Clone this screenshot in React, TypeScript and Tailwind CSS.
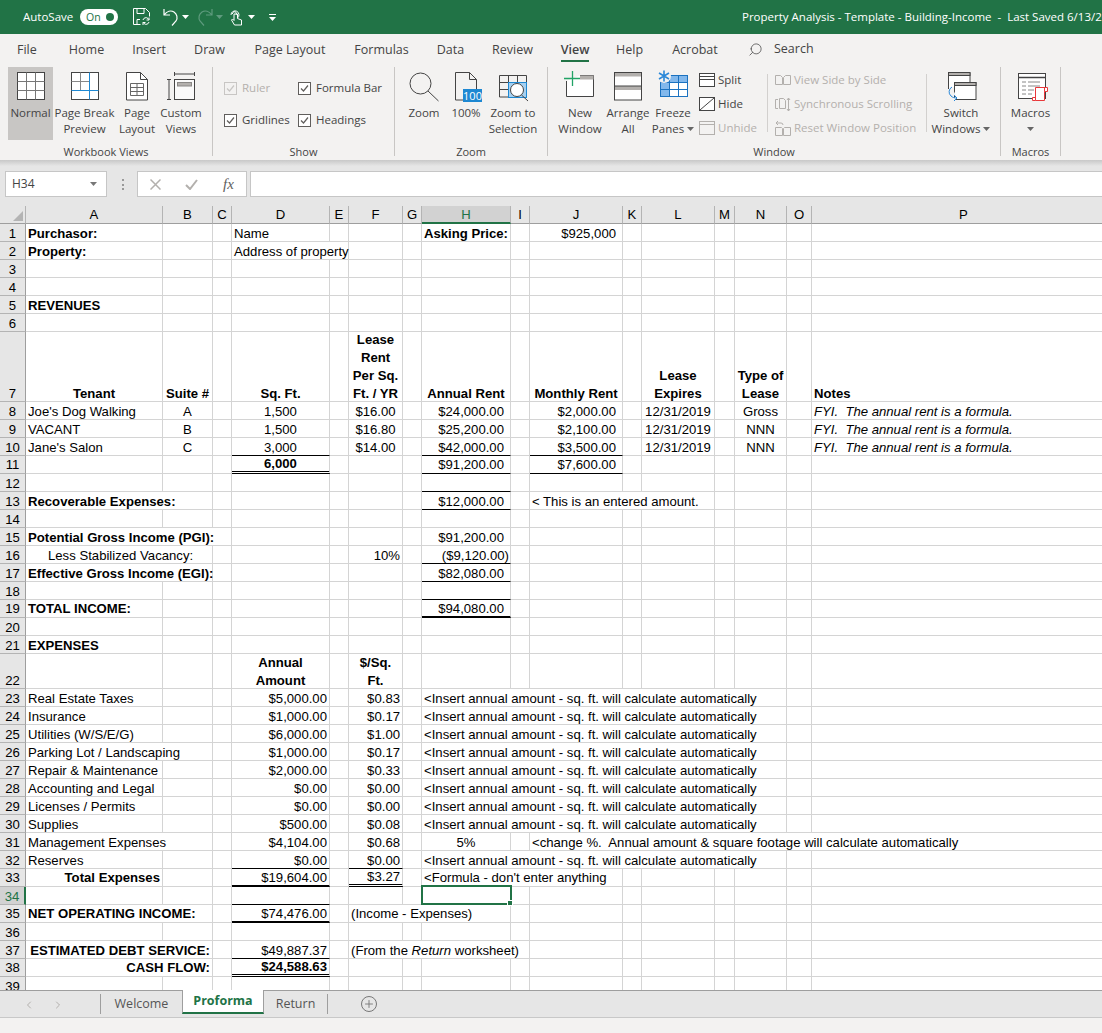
import type { ReactNode } from 'react';
import { ChevronLeft, ChevronRight, Plus, Search } from 'lucide-react';

const uiFont = 'font-["Open_Sans",sans-serif]';

function Caret({ className = '' }: { className?: string }) {
    return (
        <svg width="7" height="4" viewBox="0 0 7 4" className={`inline-block shrink-0 ${className}`}>
            <path d="M0 0h7L3.500 4z" fill="currentColor" />
        </svg>
    );
}

function Icon({ children }: { children: ReactNode }) {
    return (
        <svg width="36" height="36" viewBox="0 0 36 36" fill="none" stroke="#444" strokeWidth="1" className="shrink-0">
            {children}
        </svg>
    );
}

function BigButton({ icon, width, active, children }: { icon: ReactNode; width: string; active?: boolean; children: ReactNode }) {
    return (
        <div className={`${width} h-[73px] shrink-0 flex flex-col items-center ${active ? 'bg-[#c8c6c4]' : ''}`}>
            <div className="h-[38px] w-full flex justify-center">{icon}</div>
            <div className="text-[11.5px] leading-[16px] text-center text-[#444] whitespace-nowrap">{children}</div>
        </div>
    );
}

function Group({ width, label, children }: { width: string; label: string; children: ReactNode }) {
    return (
        <div className={`${width} h-[89px] border-r border-[#c8c6c4] shrink-0 flex flex-col`}>
            <div className="h-[77px] flex">{children}</div>
            <div className="h-[12px] leading-[16px] text-[11px] text-center text-[#444]">{label}</div>
        </div>
    );
}

function CheckItem({ label, disabled }: { label: string; disabled?: boolean }) {
    return (
        <div className={`flex items-center gap-[5px] h-[16px] text-[11.5px] whitespace-nowrap ${disabled ? 'text-[#b3b0ad]' : 'text-[#444]'}`}>
            <svg width="13" height="13" viewBox="0 0 13 13" fill="none">
                <rect x="0.5" y="0.5" width="12" height="12" fill={disabled ? '#f3f2f1' : '#fff'} stroke={disabled ? '#c8c6c4' : '#605e5c'} />
                <path d="M3 6.500l2.500 2.500L10 3.500" stroke={disabled ? '#c8c6c4' : '#605e5c'} strokeWidth="1.200" />
            </svg>
            {label}
        </div>
    );
}

function SmallRow({ icon, disabled, children }: { icon: ReactNode; disabled?: boolean; children: ReactNode }) {
    return (
        <div className={`h-[24px] flex items-center gap-[3px] text-[11.5px] whitespace-nowrap ${disabled ? 'text-[#b3b0ad]' : 'text-[#444]'}`}>
            {icon}
            {children}
        </div>
    );
}

function TitleBar() {
    return (
        <div className="h-[34px] bg-[#217346] text-white flex items-center shrink-0 overflow-hidden">
            <span className="ml-[23px] w-[57px] shrink-0 text-[11.5px]">AutoSave</span>
            <div className="w-[38px] h-[16px] shrink-0 rounded-full bg-white flex items-center justify-between pl-[6px] pr-[4px]">
                <span className="text-[10.5px] leading-none text-[#217346]">On</span>
                <span className="w-[8px] h-[8px] rounded-full bg-[#217346]" />
            </div>
            <svg width="17" height="18" viewBox="0 0 17 18" fill="none" stroke="#fff" className="ml-[15px] shrink-0">
                <path d="M.5.500h12l4 4v4M.5.500v16h7M4 .5v5h7v-5M4 16.500v-5h3" />
                <path d="M10 12a3 3 0 0 1 5-1.500l1 1M16 14a3 3 0 0 1-5 1.500l-1-1M16 9.500v2.500h-2.500M10 17v-2.500h2.500" />
            </svg>
            <svg width="16" height="18" viewBox="0 0 16 18" fill="none" stroke="#fff" strokeWidth="1.200" className="ml-[13px] shrink-0">
                <path d="M1 1v6h6M1 7c3-4 7-5 10-3s4 6 2 9l-4 4.500" />
            </svg>
            <Caret className="ml-[3px] text-white" />
            <svg width="16" height="18" viewBox="0 0 16 18" fill="none" stroke="#5f9b7e" strokeWidth="1.200" className="ml-[8px] shrink-0">
                <path d="M15 1v6H9M15 7c-3-4-7-5-10-3s-4 6-2 9l4 4.500" />
            </svg>
            <Caret className="ml-[3px] text-[#5f9b7e]" />
            <svg width="14" height="18" viewBox="0 0 14 18" fill="none" stroke="#fff" className="ml-[6px] shrink-0">
                <path d="M2 7a4 4 0 1 1 6.500 3M3.500 6a2 2 0 1 1 3.500 1" />
                <path d="M5 6v6.500l-1.500-1.500-1 1 3 5h7v-5l-4-1.500v-4.500z" />
            </svg>
            <Caret className="ml-[5px] text-white" />
            <svg width="7" height="7" viewBox="0 0 7 7" className="ml-[14px] shrink-0 text-white">
                <path d="M0 0h7v1H0zM0 3h7L3.500 7z" fill="currentColor" />
            </svg>
            <span className="ml-[466px] shrink-0 text-[11.5px] whitespace-pre">Property Analysis - Template - Building-Income  -  Last Saved 6/13/2020</span>
        </div>
    );
}

const tabs = [
    { label: 'Home', w: 'w-[35px]' },
    { label: 'Insert', w: 'w-[32px]' },
    { label: 'Draw', w: 'w-[31px]' },
    { label: 'Page Layout', w: 'w-[72px]' },
    { label: 'Formulas', w: 'w-[53px]' },
    { label: 'Data', w: 'w-[27px]' },
    { label: 'Review', w: 'w-[39px]' },
    { label: 'View', w: 'w-[28px]' },
    { label: 'Help', w: 'w-[27px] -ml-[2px]' },
    { label: 'Acrobat', w: 'w-[46px]' },
];

function TabRow() {
    return (
        <div className="h-[33px] flex items-start pl-[17px] gap-[29px] text-[12.5px] text-[#444] shrink-0">
            <span className="w-[23px] h-[28px] leading-[31px] whitespace-nowrap">File</span>
            {tabs.map((tab) => (
                <div key={tab.label} className={`${tab.w} h-[28px] flex justify-center whitespace-nowrap leading-[31px] ${tab.label === 'View' ? 'font-semibold border-b-[2px] border-[#217346]' : ''}`}>
                    {tab.label}
                </div>
            ))}
            <div className="flex items-center gap-[11px] h-[31px] ml-px">
                <Search size={15} strokeWidth={1.200} className="-scale-x-100" />
                Search
            </div>
        </div>
    );
}

function Ribbon() {
    return (
        <div className="h-[93px] flex shrink-0">
            <Group width="w-[213px]" label="Workbook Views">
                <div className="pl-2 flex">
                    <BigButton active width="w-[45px]" icon={
                        <Icon>
                            <rect x="4.500" y="5.500" width="27" height="27" fill="#fff" />
                            <path d="M13.500 5.500v27M22.500 5.500v27M4.500 14.500h27M4.500 23.500h27" stroke="#777" />
                        </Icon>
                    }>Normal</BigButton>
                    <div className="w-[2px]" />
                    <BigButton width="w-[59px]" icon={
                        <Icon>
                            <rect x="4.500" y="5.500" width="27" height="27" fill="#fff" />
                            <path d="M13.500 5.500v18M4.500 14.500h18" stroke="#888" />
                            <path d="M22.500 5.500v27M4.500 23.500h27" stroke="#1e88d2" />
                        </Icon>
                    }>Page Break<br />Preview</BigButton>
                    <div className="w-[3px]" />
                    <BigButton width="w-[40px]" icon={
                        <Icon>
                            <path d="M7.500 5.500h14l7 7v20.500h-21z" fill="#fff" />
                            <path d="M21.500 5.500v7h7" />
                            <path d="M11.500 16.500h13v12h-13zM11.500 20.500h13M11.500 24.500h13M18 16.500v12" stroke="#666" />
                        </Icon>
                    }>Page<br />Layout</BigButton>
                    <div className="w-[1px]" />
                    <BigButton width="w-[46px]" icon={
                        <Icon>
                            <path d="M11.500 5v4M31.500 5v4M11.500 7h20M4 12.500h4M4 32.500h4M6 12.500v20" />
                            <rect x="11.500" y="12.500" width="20" height="20" fill="#fafafa" />
                            <rect x="14.500" y="15.500" width="14" height="3.500" fill="#b3b0ad" stroke="#8a8886" />
                        </Icon>
                    }>Custom<br />Views</BigButton>
                </div>
            </Group>
            <Group width="w-[182px]" label="Show">
                <div className="pl-[11px] pt-[13px] grid grid-cols-[74px_90px] grid-rows-[16px_16px] gap-y-[16px]">
                    <CheckItem disabled label="Ruler" />
                    <CheckItem label="Formula Bar" />
                    <CheckItem label="Gridlines" />
                    <CheckItem label="Headings" />
                </div>
            </Group>
            <Group width="w-[153px]" label="Zoom">
                <div className="pl-[9px] flex">
                    <BigButton width="w-[40px]" icon={
                        <Icon>
                            <circle cx="14.500" cy="16.500" r="10.500" />
                            <path d="M22 24l10.500 10" />
                        </Icon>
                    }>Zoom</BigButton>
                    <div className="w-[4px]" />
                    <BigButton width="w-[36px]" icon={
                        <Icon>
                            <path d="M7.500 33V5.500h14l7 7V22M21.500 5.500v7h7M7.500 33H15" />
                            <rect x="15" y="22" width="19" height="13" fill="#1e88d2" stroke="none" />
                            <text x="24.500" y="32.500" textAnchor="middle" fontSize="11" fill="#fff" stroke="none" fontFamily="Open Sans">100</text>
                        </Icon>
                    }>100%</BigButton>
                    <div className="w-[2px]" />
                    <BigButton width="w-[54px]" icon={
                        <Icon>
                            <path d="M4.500 8.500h27v7M4.500 8.500v21.500H13M4.500 15.500h8.500M4.500 22.500h8.500M13.500 8.500v21M22.500 8.500v7" />
                            <rect x="13.500" y="15.500" width="18" height="15" fill="#a6d0f0" stroke="#1e88d2" />
                            <circle cx="22" cy="23" r="6.500" fill="#fff" />
                            <path d="M26.500 28l6.500 6" />
                        </Icon>
                    }>Zoom to<br />Selection</BigButton>
                </div>
            </Group>
            <Group width="w-[453px]" label="Window">
                <div className="pl-[8px] flex">
                    <BigButton width="w-[48px]" icon={
                        <Icon>
                            <path d="M4.500 14v15.500h27v-21H18" fill="#fff" />
                            <rect x="18" y="8.500" width="13.500" height="4" fill="#b3b0ad" stroke="none" />
                            <path d="M2 11.500h16M10.500 4v15" stroke="#21a366" strokeWidth="1.300" />
                        </Icon>
                    }>New<br />Window</BigButton>
                    <BigButton width="w-[48px]" icon={
                        <Icon>
                            <rect x="4.500" y="5.500" width="27" height="27.500" fill="#fff" />
                            <rect x="5" y="6" width="26" height="3.500" fill="#b3b0ad" stroke="none" />
                            <rect x="5" y="19" width="26" height="4" fill="#b3b0ad" stroke="none" />
                            <path d="M4.500 19h27" />
                        </Icon>
                    }>Arrange<br />All</BigButton>
                    <BigButton width="w-[42px]" icon={
                        <Icon>
                            <rect x="5.500" y="8.500" width="27" height="21" fill="#fff" />
                            <path d="M5.500 8.500h27v7h-18v14h-9z" fill="#82b8ec" stroke="none" />
                            <rect x="5.500" y="8.500" width="27" height="21" stroke="#1b72c0" />
                            <path d="M5.500 15.500h27M14.500 8.500v21M23.500 8.500v21M5.500 22.500h27" stroke="#1b72c0" />
                            <circle cx="9" cy="9" r="7" fill="#f3f2f1" stroke="none" />
                            <path d="M9 3.500v11M4 6l10 6M14 6L4 12" stroke="#2b88d8" strokeWidth="1.600" />
                        </Icon>
                    }>Freeze<br />Panes <Caret className="mb-[2px] text-[#666]" /></BigButton>
                    <div className="ml-[5px] pt-[1px] w-[68px] shrink-0">
                        <SmallRow icon={
                            <svg width="16" height="14" viewBox="0 0 16 14" fill="none" stroke="#444"><rect x=".5" y=".5" width="15" height="13" fill="#fff" /><path d="M.5 3.500h15M.5 6.500h15" /></svg>
                        }>Split</SmallRow>
                        <SmallRow icon={
                            <svg width="16" height="14" viewBox="0 0 16 14" fill="none" stroke="#444"><rect x=".5" y=".5" width="15" height="13" fill="#fff" /><path d="M1 13L15 1" /></svg>
                        }>Hide</SmallRow>
                        <SmallRow disabled icon={
                            <svg width="16" height="14" viewBox="0 0 16 14" fill="none" stroke="#b3b0ad"><rect x=".5" y=".5" width="15" height="13" /><path d="M.5 3.500h15" /></svg>
                        }>Unhide</SmallRow>
                    </div>
                    <div className="w-[1px] h-[58px] mt-[7px] bg-[#d2d0ce] shrink-0" />
                    <div className="ml-[7px] pt-[1px] w-[151px] shrink-0">
                        <SmallRow disabled icon={
                            <svg width="16" height="10" viewBox="0 0 16 10" fill="none" stroke="#b3b0ad"><path d="M.5 9.500V.5h5l2 2v7zM8.500 9.500V2.500l2-2h5v9z" /></svg>
                        }>View Side by Side</SmallRow>
                        <SmallRow disabled icon={
                            <svg width="16" height="15" viewBox="0 0 16 15" fill="none" stroke="#b3b0ad"><path d="M3 2.500H.5v9H3M4.500 11.500v-10h4l2 2v8zM13.500 1v13M12 3l1.500-2L15 3M12 12l1.500 2 1.500-2" /></svg>
                        }>Synchronous Scrolling</SmallRow>
                        <SmallRow disabled icon={
                            <svg width="16" height="15" viewBox="0 0 16 15" fill="none" stroke="#b3b0ad"><path d="M.5 14.500v-8h6l1 1v7zM8.500 14.500v-7l1-1h6v8zM3 4l-2-2 2-2M1 2h5a2 2 0 0 1 2 2" /></svg>
                        }>Reset Window Position</SmallRow>
                    </div>
                    <div className="w-[1px] h-[58px] mt-[7px] bg-[#d2d0ce] shrink-0" />
                    <BigButton width="w-[68px]" icon={
                        <Icon>
                            <path d="M5.500 22V5.500h21.500V15" fill="#fff" />
                            <rect x="5.500" y="5.500" width="21.500" height="3" fill="#b3b0ad" />
                            <rect x="11.500" y="15.500" width="21.500" height="17" fill="#fff" />
                            <rect x="11.500" y="15.500" width="21.500" height="3" fill="#b3b0ad" />
                            <path d="M9 20a5.500 5.500 0 0 0-1 9c1.500 1.500 3.500 2 6 2M11 28l3 3-3 3" stroke="#2b88d8" fill="#f3f2f1" />
                        </Icon>
                    }>Switch<br />Windows <Caret className="mb-[2px] text-[#666]" /></BigButton>
                </div>
            </Group>
            <Group width="w-[60px]" label="Macros">
                <BigButton width="w-[59px]" icon={
                    <Icon>
                        <rect x="5.500" y="6.500" width="27" height="25" fill="#fff" />
                        <path d="M5.500 10.500h27" strokeWidth="1.500" />
                        <path d="M9 15h4M15 15h12M9 19h4M15 19h12M9 23h4M15 23h6M9 27h4M15 27h4" stroke="#888" />
                        <path d="M22.500 20.500h12v4h-3v9h-9zM22.500 33.500h-3v-3h3M31.500 20.500v4" fill="#fff" stroke="#e8383b" />
                    </Icon>
                }>Macros<br /><Caret className="mb-[2px] text-[#666]" /></BigButton>
            </Group>
        </div>
    );
}

function FormulaBar() {
    return (
        <div className="h-[46px] bg-[#e6e6e6] flex items-start pt-[11px] shrink-0 relative">
            <div className="absolute top-0 left-0 right-0 h-[6px] bg-gradient-to-b from-[#c8c8c8] to-[#e6e6e6]" />
            <div className="ml-[5px] w-[102px] h-[26px] bg-white border border-[#c6c6c6] flex items-center justify-between pl-[6px] pr-[9px] text-[12px] text-[#444]">
                H34
                <Caret className="text-[#777]" />
            </div>
            <div className="ml-[14px] w-[3px] h-[11px] mt-[8px] flex flex-col justify-between items-center">
                <span className="w-[2px] h-[2px] bg-[#999]" />
                <span className="w-[2px] h-[2px] bg-[#999]" />
                <span className="w-[2px] h-[2px] bg-[#999]" />
            </div>
            <div className="ml-[13px] w-[110px] h-[26px] bg-white border border-[#c6c6c6] flex items-center">
                <svg width="11" height="11" viewBox="0 0 11 11" className="ml-[12px]" fill="none" stroke="#b3b0ad" strokeWidth="1.500"><path d="M.5.500l10 10M10.500.500l-10 10" /></svg>
                <svg width="13" height="11" viewBox="0 0 13 11" className="ml-[24px]" fill="none" stroke="#b3b0ad" strokeWidth="2"><path d="M1 6l4 4 7-9" /></svg>
                <span className="ml-[25px] text-[15px] italic leading-none text-[#605e5c] font-['Liberation_Serif',serif]">fx</span>
            </div>
            <div className="ml-[3px] flex-1 h-[26px] bg-white border border-[#c6c6c6] border-r-0" />
        </div>
    );
}

const columns = [
    { name: 'A', w: 'w-[137px]' },
    { name: 'B', w: 'w-[50px]' },
    { name: 'C', w: 'w-[19px]' },
    { name: 'D', w: 'w-[98px]' },
    { name: 'E', w: 'w-[19px]' },
    { name: 'F', w: 'w-[54px]' },
    { name: 'G', w: 'w-[19px]' },
    { name: 'H', w: 'w-[89px]' },
    { name: 'I', w: 'w-[19px]' },
    { name: 'J', w: 'w-[93px]' },
    { name: 'K', w: 'w-[19px]' },
    { name: 'L', w: 'w-[73px]' },
    { name: 'M', w: 'w-[20px]' },
    { name: 'N', w: 'w-[52px]' },
    { name: 'O', w: 'w-[25px]' },
    { name: 'P', w: 'w-[304px]' },
];

type Cell = { text?: ReactNode; span?: number; cls?: string };
type Row = { n: number; h?: string; cells?: Record<string, Cell> };

const bold = 'font-bold pl-[2px]';
const boldCenter = 'font-bold text-center';
const center = 'text-center';
const money = 'text-right pr-[6px]';
const plain = 'text-right pr-[2px]';
const left = 'pl-[2px]';
const thin = 'border-b border-b-black';
const dbl = 'border-b-[3px] [border-bottom-style:double] border-b-black pb-[1px]';
const thick = 'border-b-2 border-b-black pb-[1px]';

// rows with a heavy rule sit a pixel higher, as Excel draws them
const heavyRows = [11, 19, 33, 35, 38];

const insert = '<Insert annual amount - sq. ft. will calculate automatically';
const fyi = 'FYI.  The annual rent is a formula.';

// wrapped header cells: lines sit 18px apart and grow upward from the cell bottom
function Lines({ children }: { children: ReactNode }) {
    return (
        <div className="h-[13px] flex flex-col justify-end">
            <div className="leading-[18px] translate-y-[3px]">{children}</div>
        </div>
    );
}

function expense(n: number, name: string, amount: string, perFoot: string, nameSpan = 1): Row {
    return {
        n,
        cells: {
            A: { text: name, span: nameSpan, cls: left },
            D: { text: amount, cls: plain },
            F: { text: perFoot, cls: plain },
            H: { text: insert, span: 7, cls: left },
        },
    };
}

const rows: Row[] = [
    { n: 1, cells: { A: { text: 'Purchasor:', cls: bold }, D: { text: 'Name', cls: left }, H: { text: 'Asking Price:', cls: bold }, J: { text: '$925,000', cls: money } } },
    { n: 2, cells: { A: { text: 'Property:', cls: bold }, D: { text: 'Address of property', span: 2, cls: left } } },
    { n: 3 },
    { n: 4 },
    { n: 5, cells: { A: { text: 'REVENUES', cls: bold } } },
    { n: 6 },
    {
        n: 7,
        h: 'h-[70px]',
        cells: {
            A: { text: 'Tenant', cls: boldCenter },
            B: { text: 'Suite #', cls: boldCenter },
            D: { text: 'Sq. Ft.', cls: boldCenter },
            F: { text: <Lines>Lease<br />Rent<br />Per Sq.<br />Ft. / YR</Lines>, cls: boldCenter },
            H: { text: 'Annual Rent', cls: boldCenter },
            J: { text: 'Monthly Rent', cls: boldCenter },
            L: { text: <Lines>Lease<br />Expires</Lines>, cls: boldCenter },
            N: { text: <Lines>Type of<br />Lease</Lines>, cls: boldCenter },
            P: { text: 'Notes', cls: bold },
        },
    },
    {
        n: 8,
        cells: {
            A: { text: "Joe's Dog Walking", cls: left }, B: { text: 'A', cls: center }, D: { text: '1,500', cls: center }, F: { text: '$16.00', cls: center },
            H: { text: '$24,000.00', cls: money }, J: { text: '$2,000.00', cls: money }, L: { text: '12/31/2019', cls: center }, N: { text: 'Gross', cls: center }, P: { text: fyi, cls: `${left} italic` },
        },
    },
    {
        n: 9,
        cells: {
            A: { text: 'VACANT', cls: left }, B: { text: 'B', cls: center }, D: { text: '1,500', cls: center }, F: { text: '$16.80', cls: center },
            H: { text: '$25,200.00', cls: money }, J: { text: '$2,100.00', cls: money }, L: { text: '12/31/2019', cls: center }, N: { text: 'NNN', cls: center }, P: { text: fyi, cls: `${left} italic` },
        },
    },
    {
        n: 10,
        cells: {
            A: { text: "Jane's Salon", cls: left }, B: { text: 'C', cls: center }, D: { text: '3,000', cls: `${center} ${thin}` }, F: { text: '$14.00', cls: center },
            H: { text: '$42,000.00', cls: `${money} ${thin}` }, J: { text: '$3,500.00', cls: `${money} ${thin}` }, L: { text: '12/31/2019', cls: center }, N: { text: 'NNN', cls: center }, P: { text: fyi, cls: `${left} italic` },
        },
    },
    { n: 11, cells: { D: { text: '6,000', cls: `${boldCenter} ${dbl}` }, H: { text: '$91,200.00', cls: `${money} ${thin}` }, J: { text: '$7,600.00', cls: `${money} ${thin}` } } },
    { n: 12, cells: { H: { cls: thin } } },
    { n: 13, cells: { A: { text: 'Recoverable Expenses:', span: 2, cls: bold }, H: { text: '$12,000.00', cls: `${money} ${thin}` }, J: { text: '< This is an entered amount.', span: 3, cls: left } } },
    { n: 14 },
    { n: 15, cells: { A: { text: 'Potential Gross Income (PGI):', span: 3, cls: bold }, H: { text: '$91,200.00', cls: money } } },
    { n: 16, cells: { A: { text: 'Less Stabilized Vacancy:', span: 2, cls: 'pl-[22px]' }, F: { text: '10%', cls: plain }, H: { text: '($9,120.00)', cls: `text-right pr-[1px] ${thin}` } } },
    { n: 17, cells: { A: { text: 'Effective Gross Income (EGI):', span: 2, cls: bold }, H: { text: '$82,080.00', cls: `${money} ${thin}` } } },
    { n: 18, cells: { H: { cls: thin } } },
    { n: 19, cells: { A: { text: 'TOTAL INCOME:', cls: bold }, H: { text: '$94,080.00', cls: `${money} ${thick}` } } },
    { n: 20 },
    { n: 21, cells: { A: { text: 'EXPENSES', cls: bold } } },
    { n: 22, h: 'h-[35px]', cells: { D: { text: <Lines>Annual<br />Amount</Lines>, cls: boldCenter }, F: { text: <Lines>$/Sq.<br />Ft.</Lines>, cls: boldCenter } } },
    expense(23, 'Real Estate Taxes', '$5,000.00', '$0.83'),
    expense(24, 'Insurance', '$1,000.00', '$0.17'),
    expense(25, 'Utilities (W/S/E/G)', '$6,000.00', '$1.00'),
    expense(26, 'Parking Lot / Landscaping', '$1,000.00', '$0.17', 2),
    expense(27, 'Repair & Maintenance', '$2,000.00', '$0.33'),
    expense(28, 'Accounting and Legal', '$0.00', '$0.00'),
    expense(29, 'Licenses / Permits', '$0.00', '$0.00'),
    expense(30, 'Supplies', '$500.00', '$0.08'),
    {
        n: 31,
        cells: {
            A: { text: 'Management Expenses', span: 2, cls: left },
            D: { text: '$4,104.00', cls: plain },
            F: { text: '$0.68', cls: plain },
            H: { text: '5%', cls: center },
            J: { text: '<change %.  Annual amount & square footage will calculate automatically', span: 7, cls: left },
        },
    },
    {
        n: 32,
        cells: {
            A: { text: 'Reserves', cls: left },
            D: { text: '$0.00', cls: `${plain} ${thin}` },
            F: { text: '$0.00', cls: `${plain} ${thin}` },
            H: { text: insert, span: 7, cls: left },
        },
    },
    {
        n: 33,
        cells: {
            A: { text: 'Total Expenses', cls: 'font-bold text-right pr-[2px]' },
            D: { text: '$19,604.00', cls: `${plain} ${thick}` },
            F: { text: '$3.27', cls: `${plain} ${dbl}` },
            H: { text: "<Formula - don't enter anything", span: 3, cls: left },
        },
    },
    {
        n: 34,
        cells: {
            D: { cls: thin },
            H: {
                cls: 'relative',
                text: (
                    <div className="absolute -left-px -top-[2px] w-[91px] h-[20px] border-2 border-[#217346]">
                        <div className="absolute -right-[3px] -bottom-[3px] w-[6px] h-[6px] bg-[#217346] border border-white" />
                    </div>
                ),
            },
        },
    },
    {
        n: 35,
        cells: {
            A: { text: 'NET OPERATING INCOME:', span: 2, cls: bold },
            D: { text: '$74,476.00', cls: `${plain} ${thick}` },
            F: { text: '(Income - Expenses)', span: 3, cls: left },
        },
    },
    { n: 36 },
    {
        n: 37,
        cells: {
            A: { text: 'ESTIMATED DEBT SERVICE:', span: 2, cls: 'font-bold text-right pr-[2px]' },
            D: { text: '$49,887.37', cls: `${plain} ${thin}` },
            F: { text: <>(From the <i>Return</i> worksheet)</>, span: 4, cls: left },
        },
    },
    {
        n: 38,
        cells: {
            A: { text: 'CASH FLOW:', span: 2, cls: 'font-bold text-right pr-[2px]' },
            D: { text: '$24,588.63', cls: `font-bold text-right pr-[2px] ${dbl}` },
        },
    },
    { n: 39 },
];

function renderCells(row: Row) {
    const out: ReactNode[] = [];
    const pad = heavyRows.includes(row.n) ? 'pb-[2px]' : 'pb-[1px]';
    let i = 0;
    while (i < columns.length) {
        const name = columns[i].name;
        const cell = row.cells?.[name];
        const span = cell?.span ?? 1;
        const cls = cell?.cls ?? '';
        // ruled cells carry their own bottom border and padding
        const ruled = cls.includes('border-b-black');
        out.push(
            <td
                key={name}
                colSpan={span}
                className={`align-bottom whitespace-pre border-r border-r-[#d4d4d4] ${ruled ? '' : 'border-b border-b-[#d4d4d4]'} ${cls.includes('pb-') ? '' : pad} ${cls}`}
            >
                {cell?.text}
            </td>
        );
        i += span;
    }
    return out;
}

function Sheet() {
    return (
        <div className="h-[784px] overflow-hidden shrink-0 bg-white">
            <table className="table-fixed border-separate border-spacing-0 w-[1116px] text-[13.15px] leading-[13px] text-black font-['Liberation_Sans',Arial,sans-serif]">
                <colgroup>
                    <col className="w-[26px]" />
                    {columns.map((c) => (
                        <col key={c.name} className={c.w} />
                    ))}
                </colgroup>
                <thead>
                    <tr className="h-[18px]">
                        <th className="bg-[#e6e6e6] border-r border-b border-r-[#b4b4b4] border-b-[#9e9e9e] align-bottom">
                            <svg width="10" height="10" viewBox="0 0 10 10" className="ml-[13px] mb-[2px]"><path d="M10 0v10H0z" fill="#b4b4b4" /></svg>
                        </th>
                        {columns.map((c) => (
                            <th
                                key={c.name}
                                className={`font-normal text-center border-r border-r-[#b4b4b4] ${c.name === 'H' ? 'bg-[#d2d2d2] text-[#217346] border-b-2 border-b-[#217346]' : 'bg-[#e6e6e6] border-b border-b-[#9e9e9e]'}`}
                            >
                                {c.name}
                            </th>
                        ))}
                    </tr>
                </thead>
                <tbody>
                    {rows.map((row) => (
                        <tr key={row.n} className={row.h ?? 'h-[18px]'}>
                            <td className={`align-bottom text-center ${heavyRows.includes(row.n) ? 'pb-[2px]' : 'pb-[1px]'} border-b border-b-[#b4b4b4] ${row.n === 34 ? 'bg-[#d2d2d2] text-[#217346] border-r-2 border-r-[#217346]' : 'bg-[#e6e6e6] border-r border-r-[#9e9e9e]'}`}>
                                {row.n}
                            </td>
                            {renderCells(row)}
                        </tr>
                    ))}
                </tbody>
            </table>
        </div>
    );
}

function SheetTabs() {
    return (
        <div className="h-[28px] bg-[#e6e6e6] border-t border-[#9e9e9e] border-b border-b-[#c8c8c8] flex items-start text-[12.5px] text-[#555] shrink-0">
            <ChevronLeft size={12} strokeWidth={2} className="ml-[23px] mt-[8px] text-[#b3b0ad]" />
            <ChevronRight size={12} strokeWidth={2} className="ml-[17px] mt-[8px] text-[#b3b0ad]" />
            <div className="ml-[36px] mt-[3px] w-[82px] h-[20px] border-l border-[#9e9e9e] flex items-center justify-center">Welcome</div>
            <div className="w-[82px] h-[24px] -mt-px bg-white border-l border-r border-[#9e9e9e] border-b-2 border-b-[#217346] text-[#217346] font-bold flex items-center justify-center">Proforma</div>
            <div className="mt-[3px] w-[64px] h-[20px] border-r border-[#9e9e9e] flex items-center justify-center">Return</div>
            <div className="ml-[33px] mt-[5px] w-[16px] h-[16px] rounded-full border border-[#777] flex items-center justify-center text-[#777]">
                <Plus size={12} strokeWidth={1.800} />
            </div>
        </div>
    );
}

export default function App() {
    return (
        <div className={`w-[1102px] h-[1033px] overflow-hidden bg-[#f3f2f1] flex flex-col ${uiFont}`}>
            <TitleBar />
            <TabRow />
            <Ribbon />
            <FormulaBar />
            <Sheet />
            <SheetTabs />
        </div>
    );
}
